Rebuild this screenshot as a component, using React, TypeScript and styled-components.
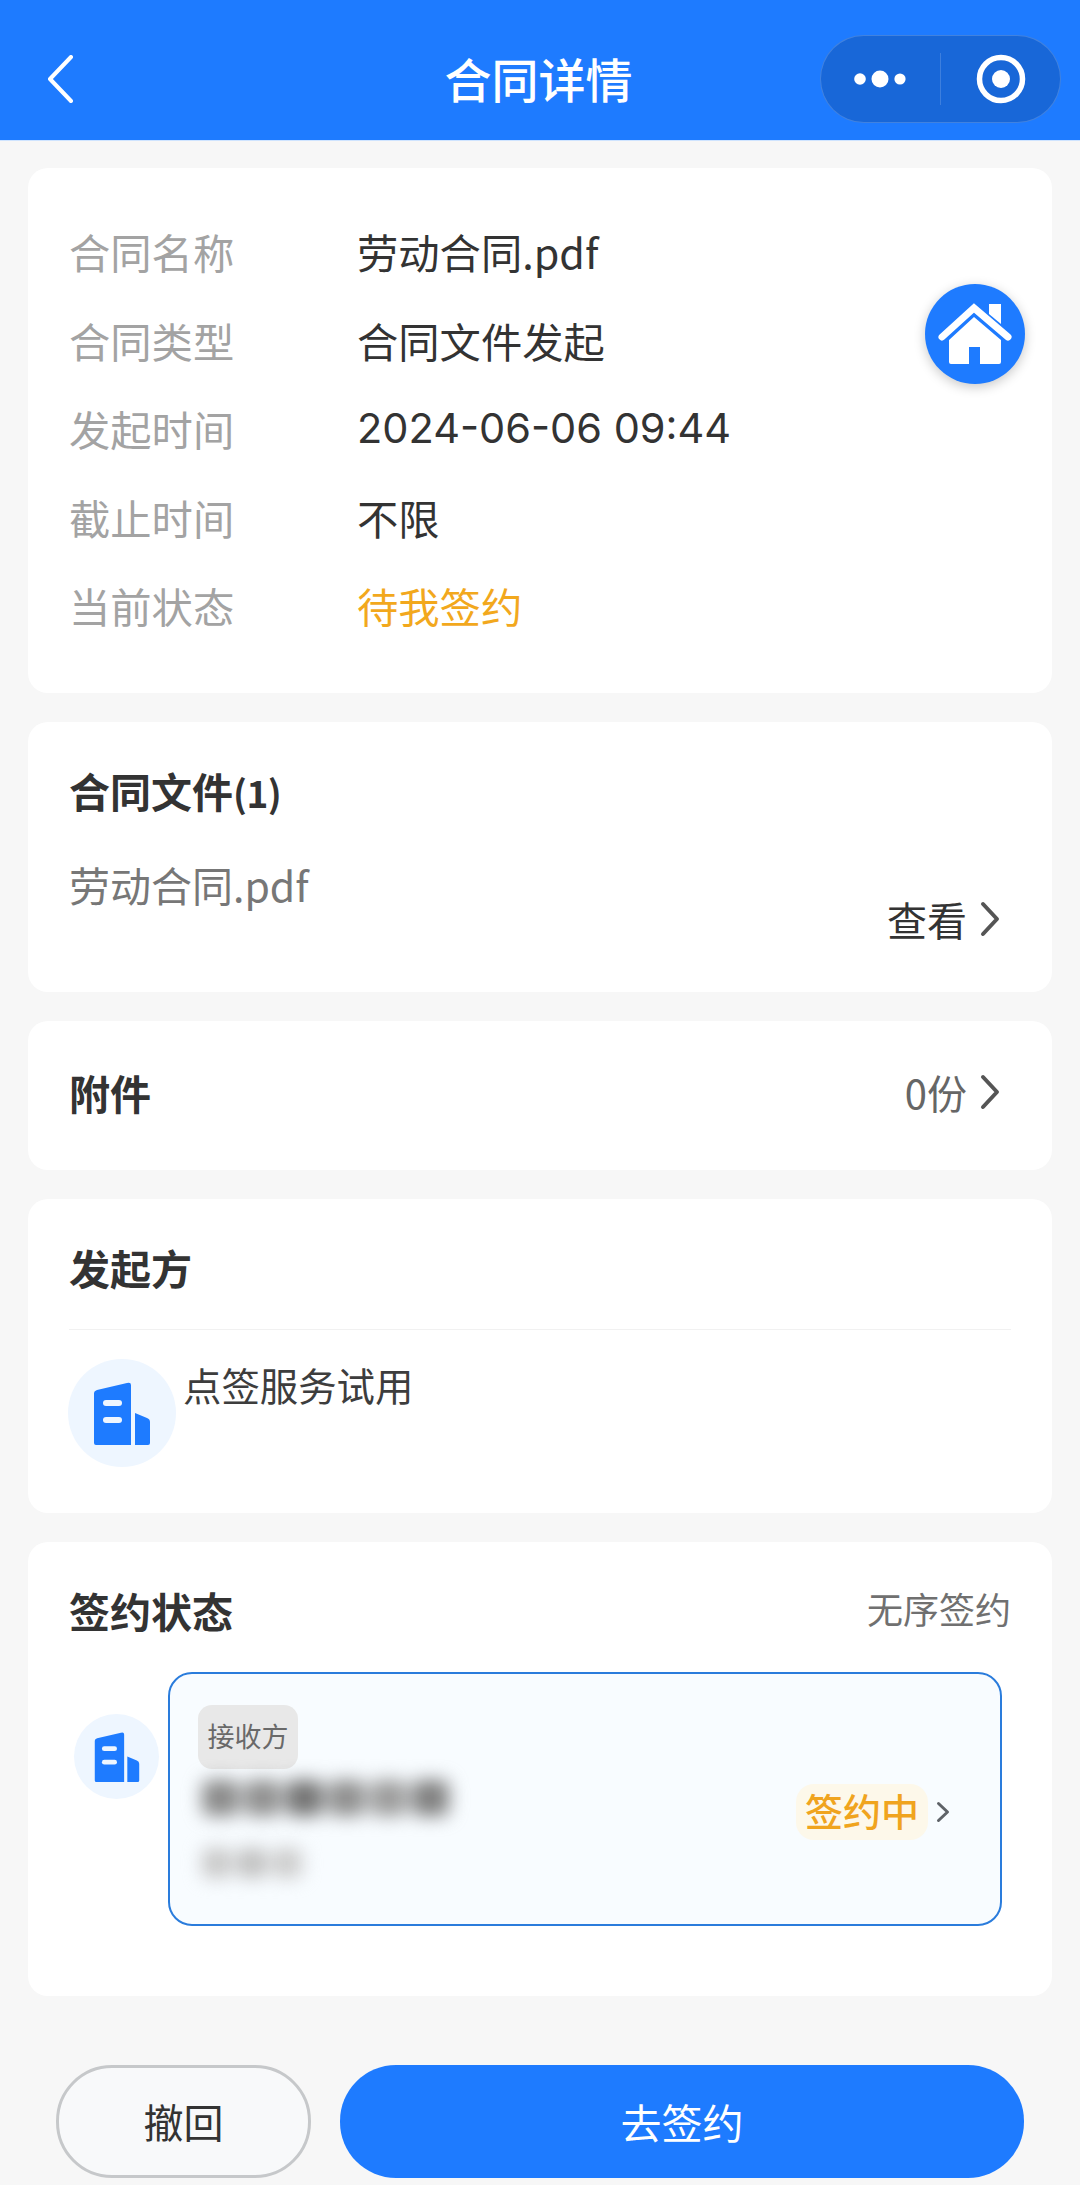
import React from "react";
import styled, { createGlobalStyle } from "styled-components";

const Global = createGlobalStyle`
  html, body { margin: 0; padding: 0; background: #f7f7f7; }
  body { font-family: "Noto Sans CJK SC", "Noto Sans", sans-serif; color: #333; }
  * { box-sizing: border-box; }
`;

const Page = styled.div`
  width: 1080px;
  height: 2185px;
  overflow: hidden;
  display: flex;
  flex-direction: column;
  background: #f7f7f7;
`;

const Header = styled.header`
  height: 141px;
  flex: none;
  background: #1e7bff;
  border-bottom: 1px solid #cfe4ff;
  display: grid;
  grid-template-columns: minmax(0, 1fr) auto minmax(0, 1fr);
  align-items: center;
  padding: 18px 19px 0;
`;

const BackButton = styled.div`
  display: flex;
  align-items: center;
  margin-left: 27px;
`;

const Title = styled.h1`
  margin: -2px 3px 0 0;
  font-size: 47px;
  line-height: 60px;
  font-weight: 500;
  color: #fff;
`;

const Capsule = styled.div`
  justify-self: end;
  width: 241px;
  height: 88px;
  border-radius: 44px;
  background: #1867d8;
  border: 1px solid rgba(255, 255, 255, 0.18);
  display: flex;
  align-items: center;
`;

const CapsuleSlot = styled.div<{ $wide?: boolean }>`
  flex: ${(p) => (p.$wide ? "0 0 120px" : "1")};
  height: 52px;
  display: flex;
  align-items: center;
  justify-content: center;
  border-right: ${(p) => (p.$wide ? "1px solid rgba(255,255,255,.16)" : "none")};
`;

const Main = styled.main`
  display: flex;
  flex-direction: column;
  gap: 29px;
  padding: 27px 28px 0;
`;

const Card = styled.section`
  position: relative;
  background: #fff;
  border-radius: 20px;
  padding: 38px 41px 0;
`;

const InfoCard = styled(Card)`
  height: 525px;
  padding-top: 39px;
`;

const InfoRow = styled.div`
  display: flex;
  height: 88.5px;
  align-items: center;
  font-size: 41.3px;
`;

const InfoLabel = styled.span`
  width: 288px;
  color: #a3a3a3;
`;

const InfoValue = styled.span<{ $accent?: boolean; $latin?: boolean }>`
  color: ${(p) => (p.$accent ? "#f2a81d" : "#333")};
  font-family: ${(p) => (p.$latin ? `"Inter", "Noto Sans CJK SC", sans-serif` : "inherit")};
  font-size: ${(p) => (p.$latin ? "41.5px" : "inherit")};
`;

const HomeFab = styled.div`
  position: absolute;
  top: 116px;
  right: 27px;
  width: 100px;
  height: 100px;
  border-radius: 50%;
  background: #1e7bff;
  box-shadow: 0 3px 12px rgba(0, 0, 0, 0.22);
`;

const FileCard = styled(Card)`
  height: 270px;
`;

const SectionTitle = styled.h2`
  margin: 0;
  font-size: 41px;
  line-height: 60px;
  font-weight: 700;
  color: #333;
`;

const TitleCount = styled.span`
  font-size: 37px;
  letter-spacing: -0.5px;
`;

const FileRow = styled.div`
  margin-top: 32px;
  height: 90px;
  display: flex;
  justify-content: space-between;
  align-items: flex-end;
  padding-right: 11px;
`;

const FileName = styled.span`
  align-self: flex-start;
  font-size: 41px;
  line-height: 60px;
  color: #777;
`;

const LinkAction = styled.div<{ $muted?: boolean }>`
  display: flex;
  align-items: center;
  gap: 13px;
  font-size: 40px;
  line-height: 50px;
  color: ${(p) => (p.$muted ? "#666" : "#333")};
`;

const AttachCard = styled(Card)`
  height: 149px;
  padding: 0 52px 7px 41px;
  display: flex;
  align-items: center;
  justify-content: space-between;
`;

const PartyCard = styled(Card)`
  height: 314px;
`;

const Divider = styled.hr`
  margin: 32px 0 29px;
  border: 0;
  border-top: 1px solid #f1f1f1;
`;

const PartyRow = styled.div`
  display: flex;
  align-items: flex-start;
  gap: 7px;
  margin-left: -1px;
`;

const PartyName = styled.span`
  font-size: 38.4px;
  line-height: 50px;
  color: #3d3d3d;
`;

const IconCircle = styled.div<{ $size: number }>`
  flex: none;
  width: ${(p) => p.$size}px;
  height: ${(p) => p.$size}px;
  border-radius: 50%;
  background: #eef6ff;
  display: flex;
  align-items: center;
  justify-content: center;
`;

const StatusCard = styled(Card)`
  height: 454px;
`;

const StatusHead = styled.div`
  display: flex;
  justify-content: space-between;
  align-items: center;
`;

const OrderText = styled.span`
  font-size: 36px;
  line-height: 50px;
  color: #707070;
  margin-top: -5px;
`;

const SignerRow = styled.div`
  margin-top: 32px;
  display: flex;
  align-items: flex-start;
  padding-left: 5px;
  gap: 9px;
`;

const SignerAvatar = styled.div`
  margin-top: 42px;
`;

const SignerBox = styled.div`
  width: 834px;
  height: 254px;
  border: 2.5px solid #2a7cdc;
  border-radius: 24px;
  background: #f8fcff;
  padding: 31px 50px 0 28px;
  display: flex;
  justify-content: space-between;
`;

const SignerInfo = styled.div`
  display: flex;
  flex-direction: column;
  align-items: flex-start;
`;

const RoleTag = styled.span`
  height: 64px;
  width: 100px;
  border-radius: 14px;
  background: #e8e8e8;
  color: #696969;
  font-size: 27px;
  line-height: 62px;
  text-align: center;
`;

const BlurLine = styled.div<{ $h: number; $top: number }>`
  display: flex;
  margin-left: 4px;
  margin-top: ${(p) => p.$top}px;
  gap: 5px;
  height: ${(p) => p.$h}px;
  filter: blur(9px);
`;

const BlurBlob = styled.i<{ $w: number; $c: string }>`
  display: block;
  width: ${(p) => p.$w}px;
  background: ${(p) => p.$c};
  border-radius: 8px;
`;

const SignerState = styled.div`
  display: flex;
  align-items: center;
  gap: 8px;
  margin-top: 79px;
  align-self: flex-start;
`;

const StatePill = styled.span`
  height: 56px;
  padding: 0 9px;
  border-radius: 18px;
  background: #fdf8ea;
  color: #f0a41e;
  font-size: 38px;
  line-height: 52px;
  font-weight: 500;
`;

const Footer = styled.footer`
  display: flex;
  gap: 29px;
  margin-top: 69px;
  padding: 0 56px;
`;

const GhostButton = styled.button`
  width: 255px;
  height: 113px;
  border-radius: 56px;
  border: 3px solid #c6c8ca;
  background: #f8f9fa;
  color: #333;
  font: inherit;
  font-size: 40px;
  padding: 0 0 2px;
`;

const PrimaryButton = styled.button`
  flex: 1;
  height: 113px;
  border-radius: 56px;
  border: 0;
  background: #1e7bff;
  color: #fff;
  font: inherit;
  font-size: 41px;
  padding: 0 0 2px;
`;

const Chevron = ({ w, h, sw, color }: { w: number; h: number; sw: number; color: string }) => (
  <svg width={w} height={h} viewBox={`0 0 ${w} ${h}`} fill="none">
    <path
      d={`M${sw / 2 + 1} ${sw / 2 + 1}L${w - sw / 2 - 1} ${h / 2}L${sw / 2 + 1} ${h - sw / 2 - 1}`}
      stroke={color}
      strokeWidth={sw}
      strokeLinecap="round"
      strokeLinejoin="round"
    />
  </svg>
);

const Building = ({ w, h, bg }: { w: number; h: number; bg: string }) => (
  <svg width={w} height={h} viewBox="0 0 56 63">
    <path d="M3 8L33 1Q37 0 37 3V63H2Q0 63 0 61V11Q0 9 3 8Z" fill="#1e7bff" />
    <path d="M41 31L53 36Q56 37 56 40V61Q56 63 54 63H41Z" fill="#1e7bff" />
    <rect x="9" y="18" width="19" height="6" rx="3" fill={bg} />
    <rect x="9" y="35" width="19" height="6" rx="3" fill={bg} />
  </svg>
);

const rows: { label: string; value: string; accent?: boolean; latin?: boolean }[] = [
  { label: "合同名称", value: "劳动合同.pdf" },
  { label: "合同类型", value: "合同文件发起" },
  { label: "发起时间", value: "2024-06-06 09:44", latin: true },
  { label: "截止时间", value: "不限" },
  { label: "当前状态", value: "待我签约", accent: true },
];

export default function App() {
  return (
    <Page>
      <Global />
      <Header>
        <BackButton>
          <svg width="28" height="48" viewBox="0 0 28 48" fill="none">
            <path d="M25 2L4 24L25 46" stroke="#fff" strokeWidth="4" strokeLinecap="round" strokeLinejoin="round" />
          </svg>
        </BackButton>
        <Title>合同详情</Title>
        <Capsule>
          <CapsuleSlot $wide>
            <svg width="54" height="20" viewBox="0 0 54 20" fill="#fff">
              <circle cx="6" cy="10" r="5.8" />
              <circle cx="26" cy="10" r="8.5" />
              <circle cx="46" cy="10" r="5.6" />
            </svg>
          </CapsuleSlot>
          <CapsuleSlot>
            <svg width="50" height="50" viewBox="0 0 50 50" fill="none">
              <circle cx="25" cy="25" r="21.5" stroke="#fff" strokeWidth="5.5" />
              <circle cx="25" cy="25" r="9" fill="#fff" />
            </svg>
          </CapsuleSlot>
        </Capsule>
      </Header>
      <Main>
        <InfoCard>
          {rows.map((r) => (
            <InfoRow key={r.label}>
              <InfoLabel>{r.label}</InfoLabel>
              <InfoValue $accent={r.accent} $latin={r.latin}>{r.value}</InfoValue>
            </InfoRow>
          ))}
          <HomeFab>
            <svg width="100" height="100" viewBox="0 0 100 100">
              <path d="M64 20H76V40L64 30Z" fill="#fff" />
              <path d="M17 53L49 24L83 53" fill="none" stroke="#fff" strokeWidth="7" strokeLinecap="round" strokeLinejoin="miter" />
              <path d="M24 56L49 33L76 56V78Q76 80 74 80H55V63H44V80H26Q24 80 24 78Z" fill="#fff" />
            </svg>
          </HomeFab>
        </InfoCard>
        <FileCard>
          <SectionTitle>合同文件<TitleCount>(1)</TitleCount></SectionTitle>
          <FileRow>
            <FileName>劳动合同.pdf</FileName>
            <LinkAction>
              查看
              <Chevron w={20} h={36} sw={4} color="#555" />
            </LinkAction>
          </FileRow>
        </FileCard>
        <AttachCard>
          <SectionTitle>附件</SectionTitle>
          <LinkAction $muted>
            0份
            <Chevron w={20} h={36} sw={4} color="#555" />
          </LinkAction>
        </AttachCard>
        <PartyCard>
          <SectionTitle>发起方</SectionTitle>
          <Divider />
          <PartyRow>
            <IconCircle $size={108}>
              <Building w={58} h={63} bg="#eef6ff" />
            </IconCircle>
            <PartyName>点签服务试用</PartyName>
          </PartyRow>
        </PartyCard>
        <StatusCard>
          <StatusHead>
            <SectionTitle>签约状态</SectionTitle>
            <OrderText>无序签约</OrderText>
          </StatusHead>
          <SignerRow>
            <SignerAvatar>
              <IconCircle $size={85}>
                <Building w={46} h={50} bg="#eef6ff" />
              </IconCircle>
            </SignerAvatar>
            <SignerBox>
              <SignerInfo>
                <RoleTag>接收方</RoleTag>
                <BlurLine $h={36} $top={11}>
                  <BlurBlob $w={37} $c="#8a8a8a" />
                  <BlurBlob $w={37} $c="#909090" />
                  <BlurBlob $w={37} $c="#747474" />
                  <BlurBlob $w={37} $c="#8f8f8f" />
                  <BlurBlob $w={37} $c="#9c9c9c" />
                  <BlurBlob $w={37} $c="#808080" />
                </BlurLine>
                <BlurLine $h={30} $top={32}>
                  <BlurBlob $w={30} $c="#c8c8c8" />
                  <BlurBlob $w={30} $c="#c0c0c0" />
                  <BlurBlob $w={30} $c="#cccccc" />
                </BlurLine>
              </SignerInfo>
              <SignerState>
                <StatePill>签约中</StatePill>
                <Chevron w={14} h={22} sw={3} color="#5f6368" />
              </SignerState>
            </SignerBox>
          </SignerRow>
        </StatusCard>
      </Main>
      <Footer>
        <GhostButton>撤回</GhostButton>
        <PrimaryButton>去签约</PrimaryButton>
      </Footer>
    </Page>
  );
}
